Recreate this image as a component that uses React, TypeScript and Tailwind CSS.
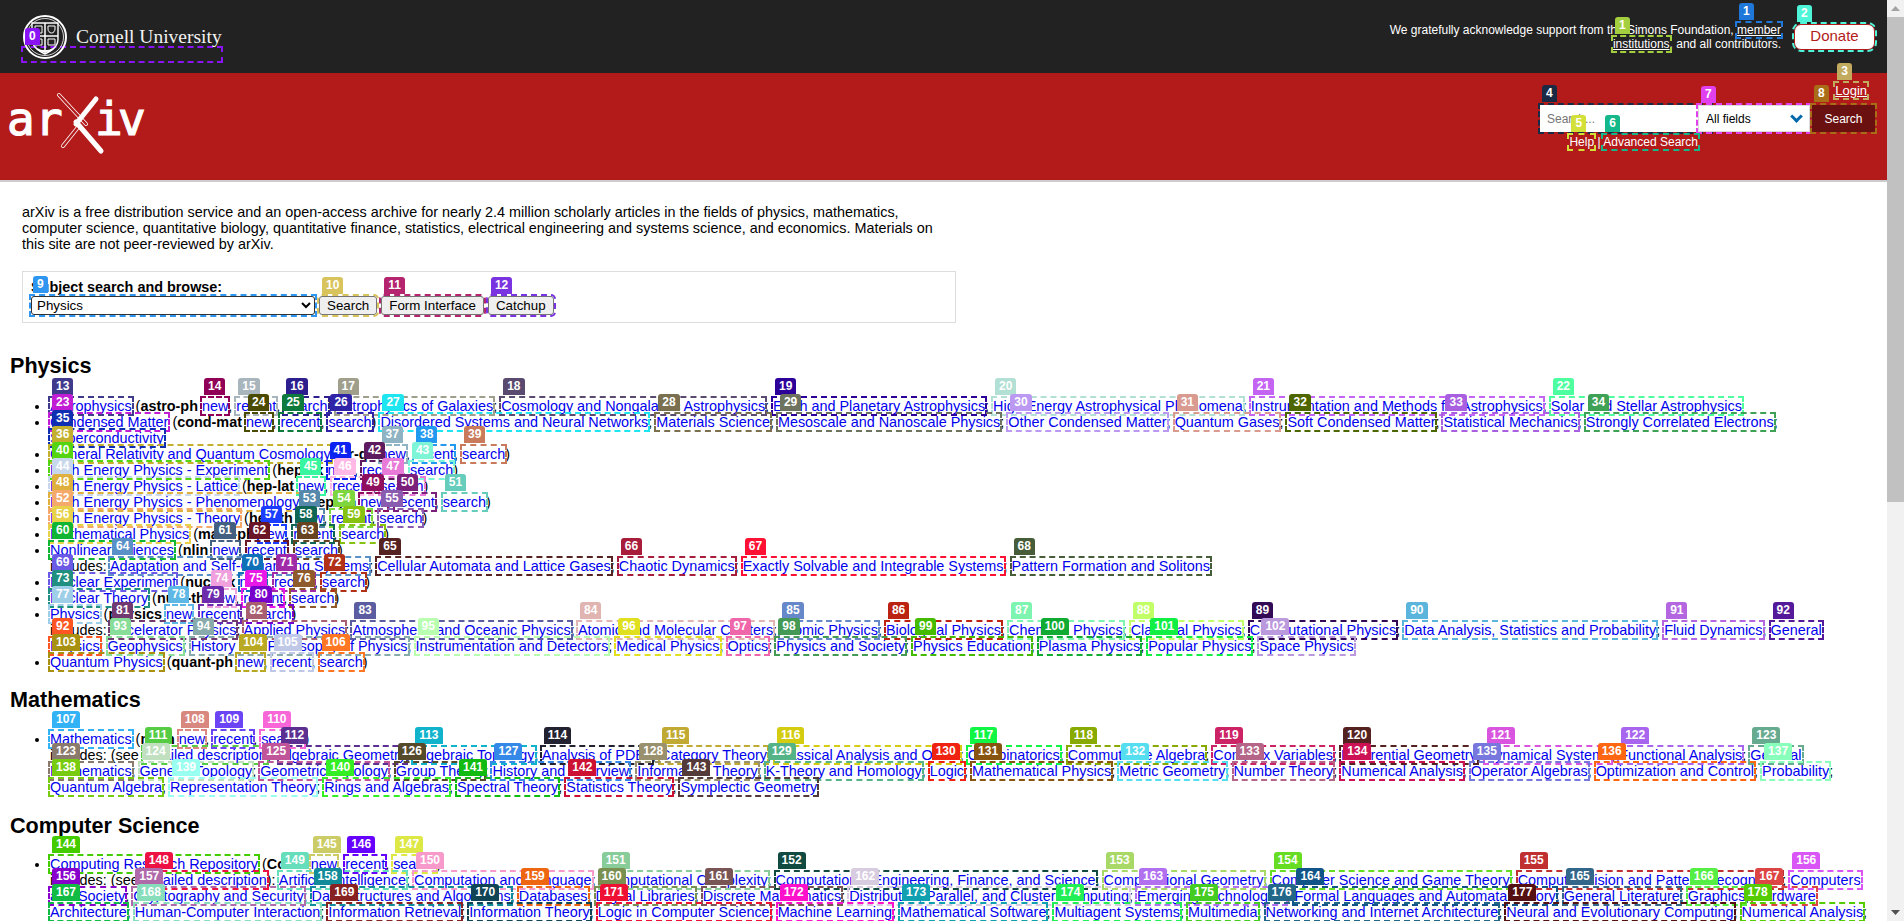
import type { ReactNode } from "react";

// link with a dashed outline and its number tag sitting above the top left corner
const A = ({ n, c, className = "text-[#0000ee]", children }: { n: number; c: string; className?: string; children: ReactNode }) => (
  <a href="#" className={`relative whitespace-nowrap outline-2 outline-dashed ${className}`} style={{ outlineColor: c }}>
    {children}
    <Tag n={n} c={c} />
  </a>
);

const Tag = ({ n, c }: { n: number; c: string }) => (
  <span
    className="absolute left-[2px] top-[-20px] z-10 h-[17px] rounded-t-[3px] px-1 font-['Liberation_Sans',sans-serif] text-[12px] leading-[17px] font-bold text-white"
    style={{ backgroundColor: c }}
  >
    {n}
  </span>
);

const Code = ({ children }: { children: ReactNode }) => <b className="font-bold">{children}</b>;

const CornellSeal = () => (
  <svg width="44" height="46" viewBox="0 0 44 46" fill="none" stroke="#ffffff">
    <circle cx="22" cy="23" r="21" strokeWidth="2" />
    <circle cx="22" cy="23" r="18.500" strokeWidth="0.8" />
    <path d="M9 9h26v16c0 8-7 12-13 15-6-3-13-7-13-15z" strokeWidth="1.400" />
    <path d="M9 22h26M22 9v31" strokeWidth="1.500" />
    <path d="M12 12h7v7h-7zM25 12h7v3c0 2-1.500 4-3.500 4s-3.500-2-3.500-4zM12 25h7v6h-7zM25 25h7v6h-7z" strokeWidth="1" />
    <path d="M14 35c4 3 12 3 16 0" strokeWidth="2" />
  </svg>
);

const ArxivLogo = () => (
  <svg width="150" height="70" viewBox="0 0 150 70" className="shrink-0">
    <g fill="white" stroke="white" strokeWidth="1.200" fontFamily="'DejaVu Sans Mono', monospace" fontSize="46">
      <text x="7" y="45">a</text>
      <text x="35" y="45">r</text>
      <text x="95" y="45">i</text>
      <text x="118" y="45">v</text>
    </g>
    <g fill="none" strokeLinecap="round">
      <line x1="59" y1="5" x2="86" y2="34" stroke="white" strokeWidth="4" />
      <line x1="59" y1="5" x2="86" y2="34" stroke="#b31b1b" strokeWidth="2.400" />
      <line x1="63" y1="56" x2="79" y2="36" stroke="white" strokeWidth="4" />
      <line x1="63" y1="56" x2="79" y2="36" stroke="#b31b1b" strokeWidth="2.400" />
      <line x1="96" y1="9" x2="76" y2="34" stroke="white" strokeWidth="5" />
      <line x1="76" y1="32" x2="101" y2="61" stroke="white" strokeWidth="5" />
    </g>
  </svg>
);

const TopBar = () => (
  <div className="flex h-[73px] justify-between bg-[#222222] pr-3">
    <a href="#" className="relative mt-[48px] ml-[23px] h-[13px] w-[198px] outline-2 outline-[#8a13f5] outline-dashed">
      <span className="absolute top-[-34px] left-0 flex items-center gap-[9px]">
        <CornellSeal />
        <span className="font-['Liberation_Serif',serif] text-[19.500px] whitespace-nowrap text-[#f2f2f2]">Cornell University</span>
      </span>
      <Tag n={0} c="#8a13f5" />
    </a>
    <div className="flex items-center gap-[13px]">
      <p className="w-[402px] text-right text-[12px] leading-[14px] text-white">
        We gratefully acknowledge support from the Simons Foundation,{" "}
        <A n={1} c="#1f77d9" className="text-white underline">member</A>{" "}
        <A n={1} c="#a3cf3f" className="text-white underline">institutions</A>, and all contributors.
      </p>
      <A n={2} c="#4ff5d8" className="flex h-[26px] w-[81px] items-center justify-center rounded-[7px] border border-[#b31b1b] bg-white text-[15px] text-[#b31b1b]">
        Donate
      </A>
    </div>
  </div>
);

const SearchBar = () => (
  <div className="flex h-[107px] justify-between border-b-0 bg-[#b31b1b] pr-3">
    <div className="mt-[17px]">
      <ArxivLogo />
    </div>
    <div className="flex flex-col items-end pt-[10px]">
      <A n={3} c="#c2ab5f" className="mr-[8px] h-[15px] text-[13px] leading-[15px] text-white underline">Login</A>
      <div className="mt-[7px] flex h-[27px]">
        <span className="relative h-[27px] w-[171px] outline-2 outline-[#1a2a44] outline-dashed">
          <input placeholder="Search..." className="h-full w-full bg-white px-[7px] text-[12px] outline-none placeholder:text-[#757575]" />
          <Tag n={4} c="#1a2a44" />
        </span>
        <span className="relative -ml-[13px] flex h-[27px] w-[112px] items-center border border-[#dbdbdb] bg-white outline-2 outline-[#e040ee] outline-dashed">
          <select defaultValue="all" className="h-full min-w-0 flex-1 appearance-none pl-[7px] text-[12px] text-black">
            <option value="all">All fields</option>
          </select>
          <span className="mr-[8px] mb-[4px] size-[9px] shrink-0 rotate-45 border-r-[3px] border-b-[3px] border-[#0068ac]" />
          <Tag n={7} c="#e040ee" />
        </span>
        <A n={8} c="#a86d16" className="ml-[2px] flex h-[27px] w-[63px] items-center justify-center bg-[#6b1010] text-[12px] text-white">
          Search
        </A>
      </div>
      <div className="mt-[3px] mr-[177px] text-[12px] leading-[14px] text-white">
        <A n={5} c="#d4e03a" className="text-white">Help</A> | <A n={6} c="#14b88a" className="text-white">Advanced Search</A>
      </div>
    </div>
  </div>
);

const Scrollbar = () => (
  <aside className="flex w-[17px] shrink-0 flex-col bg-[#f1f1f1]">
    <div className="flex h-[17px] items-center justify-center">
      <svg width="9" height="5" viewBox="0 0 9 5"><path d="M4.500 0L9 5H0z" fill="#a3a3a3" /></svg>
    </div>
    <div className="h-[485px] bg-[#c1c1c1]" />
    <div className="flex-1" />
    <div className="flex h-[17px] items-center justify-center">
      <svg width="9" height="5" viewBox="0 0 9 5"><path d="M4.500 5L9 0H0z" fill="#505050" /></svg>
    </div>
  </aside>
);

const Browse = () => (
  <div className="mt-[19px] ml-[22px] h-[52px] w-[934px] border border-[#dddddd] px-2 pt-[7px] text-[14.4px] leading-4">
    <b className="font-bold">Subject search and browse:</b>
    <div className="mt-[1px] flex h-[19px] items-start text-[13.33px]">
      <span className="relative h-[19px] w-[284px] outline-2 outline-[#2e96f0] outline-dashed">
        <select defaultValue="physics" className="block h-[19px] w-full rounded-[3px] border border-[#333333] pl-[1px]">
          <option value="physics">Physics</option>
        </select>
        <Tag n={9} c="#2e96f0" />
      </span>
      <A n={10} c="#d9c35c" className="ml-[4px] h-[19px] rounded-[3px] border border-[#767676] bg-[#efefef] px-[7px] leading-[17px] text-black">Search</A>
      <A n={11} c="#b5246e" className="ml-[4px] h-[19px] rounded-[3px] border border-[#767676] bg-[#efefef] px-[7px] leading-[17px] text-black">Form Interface</A>
      <A n={12} c="#7a33e0" className="ml-[4px] h-[19px] rounded-[3px] border border-[#767676] bg-[#efefef] px-[7px] leading-[17px] text-black">Catchup</A>
    </div>
  </div>
);

const PhysicsList = () => (
  <ul className="mt-[20px] mr-[15px] ml-2.5 list-disc pl-10 text-[14.4px] leading-4">
    <li>
      <A n={13} c="#3f3a8c">Astrophysics</A> (<Code>astro-ph</Code> <A n={14} c="#8f0056">new</A>, <A n={15} c="#a9b5bd">recent</A>, <A n={16} c="#2e1f8f">search</A>)
      {" "}<A n={17} c="#a09f8c">Astrophysics of Galaxies</A>; <A n={18} c="#5a4a70">Cosmology and Nongalactic Astrophysics</A>; <A n={19} c="#2d0099">Earth and Planetary Astrophysics</A>; <A n={20} c="#b2e0d4">High Energy Astrophysical Phenomena</A>; <A n={21} c="#c464f2">Instrumentation and Methods for Astrophysics</A>; <A n={22} c="#4dff9f">Solar and Stellar Astrophysics</A>
    </li>
    <li>
      <A n={23} c="#c01dd4">Condensed Matter</A> (<Code>cond-mat</Code> <A n={24} c="#4a4a00">new</A>, <A n={25} c="#0f7a3d">recent</A>, <A n={26} c="#2f24a8">search</A>)
      {" "}<A n={27} c="#1ee6f0">Disordered Systems and Neural Networks</A>; <A n={28} c="#7a704f">Materials Science</A>; <A n={29} c="#6e7360">Mesoscale and Nanoscale Physics</A>; <A n={30} c="#bb99f2">Other Condensed Matter</A>; <A n={31} c="#d99a8f">Quantum Gases</A>; <A n={32} c="#4d6600">Soft Condensed Matter</A>; <A n={33} c="#a860e0">Statistical Mechanics</A>; <A n={34} c="#3fa155">Strongly Correlated Electrons</A>; <A n={35} c="#0f2fb3">Superconductivity</A>
    </li>
    <li><A n={36} c="#c2b02e">General Relativity and Quantum Cosmology</A> (<Code>gr-qc</Code> <A n={37} c="#8fb3c2">new</A>, <A n={38} c="#2299f0">recent</A>, <A n={39} c="#c97a5a">search</A>)</li>
    <li><A n={40} c="#55d411">High Energy Physics - Experiment</A> (<Code>hep-ex</Code> <A n={41} c="#0d22f0">new</A>, <A n={42} c="#5e1a5e">recent</A>, <A n={43} c="#7ff5d8">search</A>)</li>
    <li><A n={44} c="#c8d8ec">High Energy Physics - Lattice</A> (<Code>hep-lat</Code> <A n={45} c="#38f5a0">new</A>, <A n={46} c="#ffb8e6">recent</A>, <A n={47} c="#e87ad8">search</A>)</li>
    <li><A n={48} c="#e0b03e">High Energy Physics - Phenomenology</A> (<Code>hep-ph</Code> <A n={49} c="#8f0f5e">new</A>, <A n={50} c="#7a1f7a">recent</A>, <A n={51} c="#66ccbb">search</A>)</li>
    <li><A n={52} c="#f5a96b">High Energy Physics - Theory</A> (<Code>hep-th</Code> <A n={53} c="#5588aa">new</A>, <A n={54} c="#7ed63e">recent</A>, <A n={55} c="#8a5cb0">search</A>)</li>
    <li><A n={56} c="#e8d24a">Mathematical Physics</A> (<Code>math-ph</Code> <A n={57} c="#1a3dff">new</A>, <A n={58} c="#0f6655">recent</A>, <A n={59} c="#88c211">search</A>)</li>
    <li>
      <A n={60} c="#0fb533">Nonlinear Sciences</A> (<Code>nlin</Code> <A n={61} c="#446080">new</A>, <A n={62} c="#6b1626">recent</A>, <A n={63} c="#664422">search</A>)
      <br />
      includes: <A n={64} c="#5a90c8">Adaptation and Self-Organizing Systems</A>; <A n={65} c="#552222">Cellular Automata and Lattice Gases</A>; <A n={66} c="#a81c3c">Chaotic Dynamics</A>; <A n={67} c="#ff1133">Exactly Solvable and Integrable Systems</A>; <A n={68} c="#475c38">Pattern Formation and Solitons</A>
    </li>
    <li><A n={69} c="#6a5ae6">Nuclear Experiment</A> (<Code>nucl-ex</Code> <A n={70} c="#1070b8">new</A>, <A n={71} c="#a02aa8">recent</A>, <A n={72} c="#b03018">search</A>)</li>
    <li><A n={73} c="#1f8f80">Nuclear Theory</A> (<Code>nucl-th</Code> <A n={74} c="#f0a0dc">new</A>, <A n={75} c="#ea18e6">recent</A>, <A n={76} c="#8f5a2c">search</A>)</li>
    <li>
      <A n={77} c="#9fcfe8">Physics</A> (<Code>physics</Code> <A n={78} c="#5eb8e6">new</A>, <A n={79} c="#6c2cab">recent</A>, <A n={80} c="#7700cc">search</A>)
      <br />
      includes: <A n={81} c="#703a70">Accelerator Physics</A>; <A n={82} c="#a86070">Applied Physics</A>; <A n={83} c="#5c5ca0">Atmospheric and Oceanic Physics</A>; <A n={84} c="#e0b4b0">Atomic and Molecular Clusters</A>; <A n={85} c="#6688c8">Atomic Physics</A>; <A n={86} c="#bb2211">Biological Physics</A>; <A n={87} c="#7df5b0">Chemical Physics</A>; <A n={88} c="#c0ff66">Classical Physics</A>; <A n={89} c="#330a55">Computational Physics</A>; <A n={90} c="#5ab4dc">Data Analysis, Statistics and Probability</A>; <A n={91} c="#b366e0">Fluid Dynamics</A>; <A n={92} c="#551a99">General</A> <A n={92} c="#ff5522">Physics</A>; <A n={93} c="#88dd99">Geophysics</A>; <A n={94} c="#88aaaa">History and Philosophy of Physics</A>; <A n={95} c="#b8ffb0">Instrumentation and Detectors</A>; <A n={96} c="#e0e020">Medical Physics</A>; <A n={97} c="#f066aa">Optics</A>; <A n={98} c="#449955">Physics and Society</A>; <A n={99} c="#44bb00">Physics Education</A>; <A n={100} c="#11aa33">Plasma Physics</A>; <A n={101} c="#11ee44">Popular Physics</A>; <A n={102} c="#bb99dd">Space Physics</A>
    </li>
    <li><A n={103} c="#a89011">Quantum Physics</A> (<Code>quant-ph</Code> <A n={104} c="#b8a822">new</A>, <A n={105} c="#c0c8e8">recent</A>, <A n={106} c="#ff7722">search</A>)</li>
  </ul>
);

const MathList = () => (
  <ul className="mt-[19px] mr-[15px] ml-2.5 list-disc pl-10 text-[14.4px] leading-4">
    <li>
      <A n={107} c="#33b3f5">Mathematics</A> (<Code>math</Code> <A n={108} c="#d98880">new</A>, <A n={109} c="#6a44f5">recent</A>, <A n={110} c="#f866d8">search</A>)
      <br />
      includes: (see <A n={111} c="#55cc44">detailed description</A>): <A n={112} c="#5c3090">Algebraic Geometry</A>; <A n={113} c="#11b3cc">Algebraic Topology</A>; <A n={114} c="#222230">Analysis of PDEs</A>; <A n={115} c="#c0aa33">Category Theory</A>; <A n={116} c="#d4cc11">Classical Analysis and ODEs</A>; <A n={117} c="#11f544">Combinatorics</A>; <A n={118} c="#88aa00">Commutative Algebra</A>; <A n={119} c="#cc2266">Complex Variables</A>; <A n={120} c="#552222">Differential Geometry</A>; <A n={121} c="#d955e0">Dynamical Systems</A>; <A n={122} c="#a866ee">Functional Analysis</A>; <A n={123} c="#66aa90">General</A> <A n={123} c="#8a7a6e">Mathematics</A>; <A n={124} c="#c0e0c0">General Topology</A>; <A n={125} c="#c05599">Geometric Topology</A>; <A n={126} c="#554a2a">Group Theory</A>; <A n={127} c="#3388e8">History and Overview</A>; <A n={128} c="#99906e">Information Theory</A>; <A n={129} c="#55b388">K-Theory and Homology</A>; <A n={130} c="#f02211">Logic</A>; <A n={131} c="#885511">Mathematical Physics</A>; <A n={132} c="#55ddf0">Metric Geometry</A>; <A n={133} c="#b56688">Number Theory</A>; <A n={134} c="#cc1155">Numerical Analysis</A>; <A n={135} c="#7777dd">Operator Algebras</A>; <A n={136} c="#ff6611">Optimization and Control</A>; <A n={137} c="#88ffbb">Probability</A>; <A n={138} c="#77cc11">Quantum Algebra</A>; <A n={139} c="#99fff0">Representation Theory</A>; <A n={140} c="#33ee22">Rings and Algebras</A>; <A n={141} c="#11bb11">Spectral Theory</A>; <A n={142} c="#cc1133">Statistics Theory</A>; <A n={143} c="#553a3a">Symplectic Geometry</A>
    </li>
  </ul>
);

const CsList = () => (
  <ul className="mt-[18px] mr-[15px] ml-2.5 list-disc pl-10 text-[14.4px] leading-4">
    <li>
      <A n={144} c="#44cc00">Computing Research Repository</A> (<Code>CoRR</Code> <A n={145} c="#cccc66">new</A>, <A n={146} c="#6600ff">recent</A>, <A n={147} c="#dde844">search</A>)
      <br />
      includes: (see <A n={148} c="#ee1144">detailed description</A>): <A n={149} c="#66ddbb">Artificial Intelligence</A>; <A n={150} c="#f899cc">Computation and Language</A>; <A n={151} c="#88cc99">Computational Complexity</A>; <A n={152} c="#114a40">Computational Engineering, Finance, and Science</A>; <A n={153} c="#a8d866">Computational Geometry</A>; <A n={154} c="#66dd22">Computer Science and Game Theory</A>; <A n={155} c="#c03030">Computer Vision and Pattern Recognition</A>; <A n={156} c="#d955f5">Computers</A> <A n={156} c="#8800cc">and Society</A>; <A n={157} c="#b06aaa">Cryptography and Security</A>; <A n={158} c="#118a99">Data Structures and Algorithms</A>; <A n={159} c="#ee6611">Databases</A>; <A n={160} c="#7a9050">Digital Libraries</A>; <A n={161} c="#7a5555">Discrete Mathematics</A>; <A n={162} c="#d8cce0">Distributed, Parallel, and Cluster Computing</A>; <A n={163} c="#b070f0">Emerging Technologies</A>; <A n={164} c="#115588">Formal Languages and Automata Theory</A>; <A n={165} c="#336688">General Literature</A>; <A n={166} c="#55ee44">Graphics</A>; <A n={167} c="#dd4444">Hardware</A> <A n={167} c="#11bb44">Architecture</A>; <A n={168} c="#88ddbb">Human-Computer Interaction</A>; <A n={169} c="#882222">Information Retrieval</A>; <A n={170} c="#114455">Information Theory</A>; <A n={171} c="#ee1133">Logic in Computer Science</A>; <A n={172} c="#ff11cc">Machine Learning</A>; <A n={173} c="#11a0b0">Mathematical Software</A>; <A n={174} c="#22ee55">Multiagent Systems</A>; <A n={175} c="#44cc22">Multimedia</A>; <A n={176} c="#226688">Networking and Internet Architecture</A>; <A n={177} c="#551111">Neural and Evolutionary Computing</A>; <A n={178} c="#55cc00">Numerical Analysis</A>;
    </li>
  </ul>
);

const App = () => (
  <div className="flex h-screen w-screen overflow-hidden bg-white font-['Liberation_Sans',Arial,sans-serif] text-black">
    <div className="min-w-0 flex-1">
      <header className="border-b-2 border-[#cccccc]">
        <TopBar />
        <SearchBar />
      </header>
      <main>
        <p className="mt-[22px] ml-[22px] w-[925px] text-[14.4px] leading-4">
          arXiv is a free distribution service and an open-access archive for nearly 2.4 million scholarly articles in the fields of physics, mathematics, computer science, quantitative biology, quantitative finance, statistics, electrical engineering and systems science, and economics. Materials on this site are not peer-reviewed by arXiv.
        </p>
        <Browse />
        <h2 className="mt-[31px] ml-2.5 text-[21.6px] leading-6 font-bold">Physics</h2>
        <PhysicsList />
        <h2 className="mt-[18px] ml-2.5 text-[21.6px] leading-6 font-bold">Mathematics</h2>
        <MathList />
        <h2 className="mt-[19px] ml-2.5 text-[21.6px] leading-6 font-bold">Computer Science</h2>
        <CsList />
      </main>
    </div>
    <Scrollbar />
  </div>
);

export default App;
